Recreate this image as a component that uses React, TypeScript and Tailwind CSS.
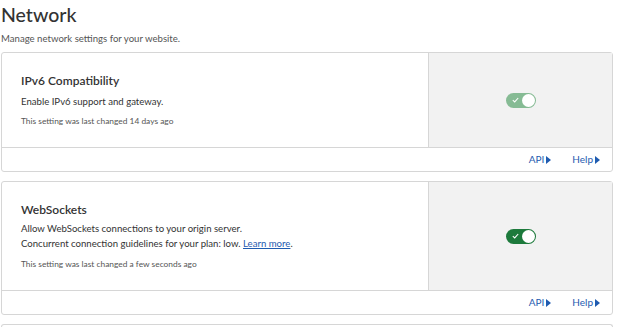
import React from "react";

const font = { fontFamily: 'Lato, "Open Sans", sans-serif' };

function Toggle({ dim }: { dim?: boolean }) {
  return (
    <div
      className={`relative w-[30px] h-[15px] rounded-full ${dim ? "bg-[#86bb94]" : "bg-[#1d7a3c]"}`}
    >
      <svg className="absolute left-[6px] top-[4px]" width="7" height="6" viewBox="0 0 7 6">
        <path d="M0.8 3.2 L2.7 4.9 L6.2 1" stroke="#fff" strokeWidth="1.1" fill="none" />
      </svg>
      <div className="absolute right-[1px] top-[1px] w-[13px] h-[13px] rounded-full bg-white" />
    </div>
  );
}

function Arrow() {
  return (
    <svg width="5" height="8" viewBox="0 0 5 8" className="ml-[2px]">
      <path d="M0 0 L5 4 L0 8 Z" fill="#1f5bb0" />
    </svg>
  );
}

function Card({ children, dim, tall }: { children: React.ReactNode; dim?: boolean; tall?: boolean }) {
  return (
    <div className="border border-[#d6d6d6] rounded-[3px] bg-white w-[612px]">
      <div className={`flex ${tall ? "h-[108px]" : "h-[94px]"}`}>
        <div className="flex-1 pl-[19px] pt-[18px]">{children}</div>
        <div className="w-[184px] bg-[#f2f2f2] border-l border-[#d6d6d6] flex items-center justify-center">
          <Toggle dim={dim} />
        </div>
      </div>
      <div className="h-[24px] border-t border-[#d6d6d6] flex items-center justify-end pr-[12px] text-[10px] text-[#1f5bb0]">
        <span className="flex items-center">API<Arrow /></span>
        <span className="flex items-center ml-[21px]">Help<Arrow /></span>
      </div>
    </div>
  );
}

export default function App() {
  return (
    <div className="w-[624px] h-[327px] bg-white overflow-hidden text-[#333]" style={font}>
      <div className="pl-[1px]">
        <h1 className="text-[19.5px] leading-[28px] pt-[1px] font-medium text-[#333]">Network</h1>
        <p className="text-[9.6px] leading-[14px] mt-[3px] text-[#555]">Manage network settings for your website.</p>
        <div className="mt-[6px] flex flex-col gap-[9px]">
          <Card dim>
            <div className="text-[12px] leading-[20px] font-semibold text-[#333]">IPv6 Compatibility</div>
            <div className="text-[9.6px] leading-[15px] mt-[3px] text-[#333]">Enable IPv6 support and gateway.</div>
            <div className="text-[8.4px] leading-[12px] mt-[6px] text-[#555]">This setting was last changed 14 days ago</div>
          </Card>
          <Card tall>
            <div className="text-[12px] leading-[20px] font-semibold text-[#333]">WebSockets</div>
            <div className="text-[9.6px] leading-[15px] mt-[1px] text-[#333]">Allow WebSockets connections to your origin server.</div>
            <div className="text-[9.6px] leading-[15px] text-[#333]">
              Concurrent connection guidelines for your plan: low.{" "}
              <span className="text-[#1f5bb0] underline">Learn more</span>.
            </div>
            <div className="text-[8.4px] leading-[12px] mt-[7px] text-[#555]">This setting was last changed a few seconds ago</div>
          </Card>
          <div className="border-t border-[#d6d6d6] w-[612px] h-[4px] rounded-t-[3px] border-x" />
        </div>
      </div>
    </div>
  );
}
